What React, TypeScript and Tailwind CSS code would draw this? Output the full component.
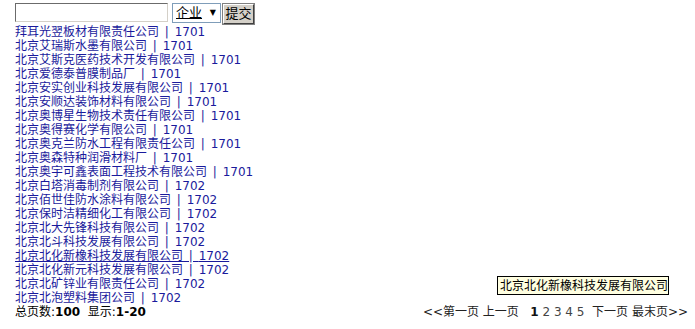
import React from "react";

const companies: [string, string][] = [
  ["拜耳光翌板材有限责任公司", "1701"],
  ["北京艾瑞斯水墨有限公司", "1701"],
  ["北京艾斯克医药技术开发有限公司", "1701"],
  ["北京爱德泰普膜制品厂", "1701"],
  ["北京安实创业科技发展有限公司", "1701"],
  ["北京安顺达装饰材料有限公司", "1701"],
  ["北京奥博星生物技术责任有限公司", "1701"],
  ["北京奥得赛化学有限公司", "1701"],
  ["北京奥克兰防水工程有限责任公司", "1701"],
  ["北京奥森特种润滑材料厂", "1701"],
  ["北京奥宇可鑫表面工程技术有限公司", "1701"],
  ["北京白塔消毒制剂有限公司", "1702"],
  ["北京佰世佳防水涂料有限公司", "1702"],
  ["北京保时洁精细化工有限公司", "1702"],
  ["北京北大先锋科技有限公司", "1702"],
  ["北京北斗科技发展有限公司", "1702"],
  ["北京北化新橡科技发展有限公司", "1702"],
  ["北京北化新元科技发展有限公司", "1702"],
  ["北京北矿锌业有限责任公司", "1702"],
  ["北京北泡塑料集团公司", "1702"],
];

const font = "font-['DejaVu_Sans','Noto_Sans_CJK_SC',sans-serif]";

export default function App() {
  return (
    <div className={`relative w-[695px] h-[329px] bg-white text-[12px] leading-[14px] pl-[15px] pt-[3px] ${font}`}>
      {/* search form */}
      <div className="flex items-start h-[21px]">
        <input
          className="w-[153px] h-[19px] border border-t-[#6b6b6b] border-l-[#6b6b6b] border-r-[#d4d0c8] border-b-[#d4d0c8] bg-white"
          defaultValue=""
        />
        <div className="ml-[4px] w-[49px] h-[20px] border border-[#7f9db9] bg-white flex items-center">
          <span className="pl-[3px] underline text-[13px] leading-[16px] text-black">企业</span>
          <span className="ml-auto mr-[4px] text-[8px] text-black">▼</span>
        </div>
        <button className="ml-[2px] w-[31px] h-[20px] mt-[1px] border border-t-white border-l-white border-r-[#404040] border-b-[#404040] bg-[#d4d0c8] text-[13px] leading-[16px] text-black outline outline-1 outline-[#808080]">
          提交
        </button>
      </div>

      {/* company list */}
      <div className="mt-[1px]">
        {companies.map(([name, code], i) => (
          <div key={i} className="h-[14px]">
            <a
              href="#"
              className={`text-[#1a1a9c] whitespace-nowrap [word-spacing:2px] ${i === 16 ? "underline" : "no-underline"}`}
            >
              {name} | {code}
            </a>
          </div>
        ))}
      </div>

      {/* footer */}
      <div className="flex items-center justify-between pr-[7px] h-[14px] text-black">
        <div>
          总页数:<b>100</b>&nbsp; 显示:<b>1-20</b>
        </div>
        <div className="text-[#222]">
          &lt;&lt;第一页 上一页&nbsp;&nbsp; <b className="text-[#111]">1</b>{" "}
          <span className="text-[#444]">2 3 4 5</span>&nbsp;&nbsp;下一页 最末页&gt;&gt;
        </div>
      </div>

      {/* hover tooltip */}
      <div className="absolute left-[497px] top-[276px] w-[172px] h-[19px] border border-black bg-[#ffffe1] text-black flex items-center pl-[2px] whitespace-nowrap">
        北京北化新橡科技发展有限公司
      </div>
    </div>
  );
}
